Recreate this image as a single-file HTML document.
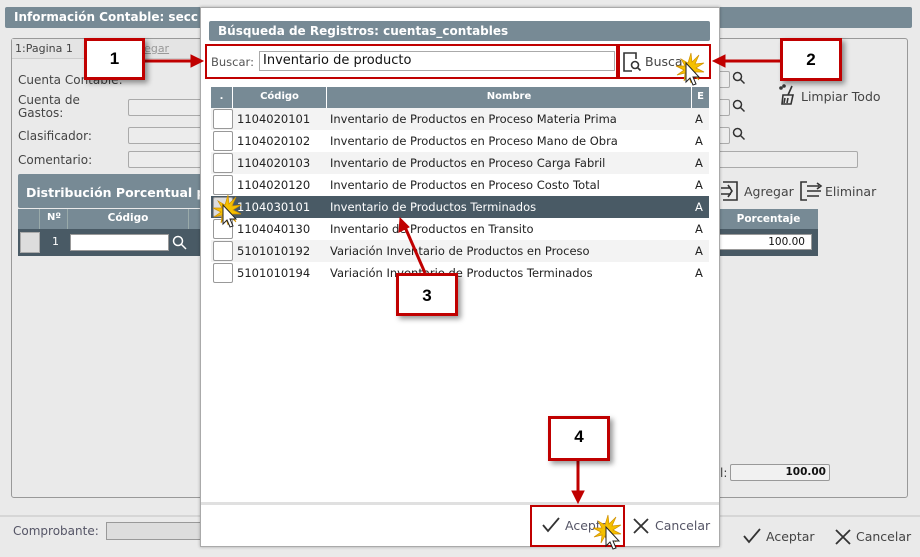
<!DOCTYPE html>
<html><head><meta charset="utf-8"><style>
*{box-sizing:border-box;margin:0;padding:0}
body{width:920px;height:557px;background:#eaeaea;font-family:"DejaVu Sans","Liberation Sans",sans-serif;font-size:12px;color:#333;position:relative;overflow:hidden}
.a{position:absolute}
.hdr{background:#778a95;color:#fff;font-weight:bold;font-size:12px;border-radius:2px;white-space:nowrap;overflow:hidden}
.inp{position:absolute;border:1px solid #aaa;background:#ececec;border-radius:2px}
.lbl{position:absolute;color:#444;font-size:12px;white-space:nowrap}
.row{position:absolute;left:211px;width:498px;height:22px;font-size:11.5px;line-height:22px;color:#222}
.row span{position:absolute;white-space:nowrap}
.cb{position:absolute;left:2px;top:1px;width:20px;height:20px;border:1px solid #999;background:#fff;border-radius:2px}
.box{position:absolute;border:3px solid #c00000;background:#fff;box-shadow:3px 3px 5px rgba(0,0,0,.4);font-family:"Liberation Sans",sans-serif;font-weight:bold;font-size:17px;text-align:center;color:#000}
.rr{position:absolute;border:2px solid #c00000}
</style></head><body>
<div class="a hdr" style="left:5px;top:7px;width:907px;height:21px;padding:3px 9px">Información Contable: secc</div>
<div class="a" style="left:11px;top:38px;width:897px;height:460px;border:1px solid #999;border-radius:3px"></div>
<div class="a" style="left:12px;top:39px;width:190px;height:20px;background:#e4e4e4;border-bottom:1px solid #ccc;font-size:11px;color:#444;padding:3px 3px;white-space:nowrap">1:Pagina 1 &nbsp;&nbsp;&nbsp;&nbsp;&nbsp;&nbsp;&nbsp;&nbsp;&nbsp;&nbsp;&nbsp;&nbsp;&nbsp;&nbsp;<u style="color:#999">Agregar</u></div>
<div class="lbl" style="left:18px;top:73px">Cuenta Contable:</div>
<div class="lbl" style="left:18px;top:94px;line-height:13px">Cuenta de<br>Gastos:</div>
<div class="lbl" style="left:18px;top:129px">Clasificador:</div>
<div class="lbl" style="left:18px;top:153px">Comentario:</div>
<div class="inp" style="left:128px;top:99px;width:80px;height:17px"></div>
<div class="inp" style="left:128px;top:127px;width:80px;height:17px"></div>
<div class="inp" style="left:128px;top:151px;width:80px;height:17px"></div>
<div class="inp" style="left:718px;top:71px;width:12px;height:17px"></div>
<div class="inp" style="left:718px;top:99px;width:12px;height:17px"></div>
<div class="inp" style="left:718px;top:127px;width:12px;height:17px"></div>
<div class="inp" style="left:718px;top:151px;width:140px;height:17px"></div>
<svg class="a" style="left:732px;top:71px" width="14" height="80" fill="none" stroke="#333" stroke-width="1.5"><circle cx="5.5" cy="5.5" r="4"/><path d="M8.5 8.5l4 4"/><circle cx="5.5" cy="33.5" r="4"/><path d="M8.5 36.5l4 4"/><circle cx="5.5" cy="61.5" r="4"/><path d="M8.5 64.5l4 4"/></svg>
<svg class="a" style="left:778px;top:84px" width="20" height="22" fill="none" stroke="#333" stroke-width="1.6"><path d="M14 2l-4 9M5 11h10l-2 9H4z M7 14l-1 5M10 14l-1 5"/><circle cx="3" cy="4" r="1"/><circle cx="6" cy="2" r="1"/></svg>
<div class="lbl" style="left:801px;top:89px;font-size:12.5px">Limpiar Todo</div>
<div class="a hdr" style="left:18px;top:174px;width:184px;height:34px;padding:11px 8px;font-size:12.5px">Distribución Porcentual p</div>
<div class="a" style="left:18px;top:209px;width:184px;height:20px;background:#778a95"></div>
<div class="a" style="left:18px;top:209px;width:22px;height:20px;border-right:1px solid #9aa"></div>
<div class="a" style="left:41px;top:212px;color:#fff;font-size:10px;font-weight:bold;width:26px;text-align:center">Nº</div>
<div class="a" style="left:67px;top:209px;width:122px;height:20px;border-left:1px solid #9aa;border-right:1px solid #9aa;color:#fff;font-weight:bold;font-size:10.5px;text-align:center;padding-top:3px">Código</div>
<div class="a" style="left:18px;top:229px;width:184px;height:27px;background:#495a65"></div>
<div class="a" style="left:20px;top:232px;width:20px;height:21px;background:#ddd;border:1px solid #aaa"></div>
<div class="a" style="left:52px;top:235px;color:#fff;font-size:11px">1</div>
<div class="a" style="left:70px;top:234px;width:99px;height:17px;background:#fff;border:1px solid #999"></div>
<svg class="a" style="left:172px;top:235px" width="16" height="16" fill="none" stroke="#fff" stroke-width="1.5"><circle cx="6" cy="6" r="4.5"/><path d="M9.5 9.5l4.5 4.5"/></svg>
<svg class="a" style="left:719px;top:180px" width="22" height="22" fill="none" stroke="#333" stroke-width="1.6"><path d="M4 2h14v18H4M2 8h10M2 14h10M9 5l4 6-4 6"/></svg>
<div class="lbl" style="left:744px;top:184px;font-size:12.5px">Agregar</div>
<svg class="a" style="left:799px;top:180px" width="24" height="22" fill="none" stroke="#333" stroke-width="1.6"><path d="M8 2H2v18h6M8 6h12M8 11h14M8 16h12M18 3l4 3-4 3"/></svg>
<div class="lbl" style="left:825px;top:184px;font-size:12.5px">Eliminar</div>
<div class="a" style="left:719px;top:209px;width:99px;height:20px;background:#778a95;color:#fff;font-weight:bold;font-size:10.5px;text-align:center;padding-top:4px">Porcentaje</div>
<div class="a" style="left:719px;top:229px;width:99px;height:27px;background:#495a65"></div>
<div class="a" style="left:719px;top:234px;width:93px;height:16px;background:#fff;border:1px solid #999;text-align:right;font-size:10.5px;padding-right:6px;line-height:14px;color:#111">100.00</div>
<div class="lbl" style="left:720px;top:466px">l:</div>
<div class="a" style="left:730px;top:464px;width:100px;height:17px;border:1px solid #999;background:#f1f1f1;border-radius:2px;text-align:right;font-size:10.5px;font-weight:bold;padding-right:3px;line-height:15px;color:#111">100.00</div>
<div class="a" style="left:0;top:515px;width:920px;height:2px;background:#d6d6d6"></div>
<div class="lbl" style="left:13px;top:524px;color:#556">Comprobante:</div>
<div class="a" style="left:106px;top:522px;width:100px;height:18px;border:1px solid #999;background:#ddd"></div>
<svg class="a" style="left:742px;top:527px" width="20" height="18" fill="none" stroke="#333" stroke-width="1.8"><path d="M2 9l5 6L18 2"/></svg>
<div class="lbl" style="left:766px;top:529px;font-size:12.5px">Aceptar</div>
<svg class="a" style="left:834px;top:528px" width="18" height="18" fill="none" stroke="#333" stroke-width="1.8"><path d="M2 2l14 14M16 2L2 16"/></svg>
<div class="lbl" style="left:856px;top:529px;font-size:12.5px">Cancelar</div>

<div class="a" style="left:200px;top:7px;width:520px;height:540px;background:#fff;border:1px solid #aaa;box-shadow:0 0 3px rgba(0,0,0,.3)"></div>
<div class="a hdr" style="left:209px;top:21px;width:501px;height:20px;padding:3px 9px;font-size:12px">Búsqueda de Registros: cuentas_contables</div>
<div class="lbl" style="left:211px;top:55px;font-size:11.5px;color:#555">Buscar:</div>
<div class="a" style="left:259px;top:51px;width:356px;height:20px;border:1px solid #aaa;font-size:13px;color:#111;padding:1px 3px">Inventario de producto</div>
<svg class="a" style="left:622px;top:51px" width="20" height="22" fill="none" stroke="#333" stroke-width="1.6"><path d="M10 20H2V2h12v6"/><circle cx="13" cy="14" r="3.5"/><path d="M15.5 16.5l3 3"/></svg>
<div class="lbl" style="left:645px;top:54px;font-size:12.5px">Busca</div>
<div class="a" style="left:211px;top:87px;width:498px;height:21px;background:#778a95;color:#fff;font-weight:bold;font-size:10px">
<div class="a" style="left:0;top:0;width:22px;height:21px;border-right:1px solid #fff;text-align:center;padding-top:4px">.</div>
<div class="a" style="left:22px;top:0;width:94px;height:21px;border-right:1px solid #fff;text-align:center;padding-top:4px">Código</div>
<div class="a" style="left:116px;top:0;width:365px;height:21px;border-right:1px solid #fff;text-align:center;padding-top:4px">Nombre</div>
<div class="a" style="left:481px;top:0;width:17px;height:21px;text-align:center;padding-top:4px">E</div>
</div>
<div class="row" style="top:108px;background:#f3f3f3"><i class="cb"></i><span style="left:26px">1104020101</span><span style="left:119px">Inventario de Productos en Proceso Materia Prima</span><span style="left:484px">A</span></div>
<div class="row" style="top:130px;background:#fff"><i class="cb"></i><span style="left:26px">1104020102</span><span style="left:119px">Inventario de Productos en Proceso Mano de Obra</span><span style="left:484px">A</span></div>
<div class="row" style="top:152px;background:#f3f3f3"><i class="cb"></i><span style="left:26px">1104020103</span><span style="left:119px">Inventario de Productos en Proceso Carga Fabril</span><span style="left:484px">A</span></div>
<div class="row" style="top:174px;background:#fff"><i class="cb"></i><span style="left:26px">1104020120</span><span style="left:119px">Inventario de Productos en Proceso Costo Total</span><span style="left:484px">A</span></div>
<div class="row" style="top:196px;background:#495a65;color:#fff"><i class="cb" style="background:#ddd"></i><span style="left:26px">1104030101</span><span style="left:119px">Inventario de Productos Terminados</span><span style="left:484px">A</span></div>
<div class="row" style="top:218px;background:#fff"><i class="cb"></i><span style="left:26px">1104040130</span><span style="left:119px">Inventario de Productos en Transito</span><span style="left:484px">A</span></div>
<div class="row" style="top:240px;background:#f3f3f3"><i class="cb"></i><span style="left:26px">5101010192</span><span style="left:119px">Variación Inventario de Productos en Proceso</span><span style="left:484px">A</span></div>
<div class="row" style="top:262px;background:#fff"><i class="cb"></i><span style="left:26px">5101010194</span><span style="left:119px">Variación Inventario de Productos Terminados</span><span style="left:484px">A</span></div>
<div class="a" style="left:201px;top:502px;width:518px;height:3px;background:#e0e0e0"></div>
<svg class="a" style="left:541px;top:516px" width="20" height="18" fill="none" stroke="#333" stroke-width="1.8"><path d="M2 9l5 6L18 2"/></svg>
<div class="lbl" style="left:565px;top:518px;font-size:12.5px;color:#556">Acepta</div>
<svg class="a" style="left:632px;top:517px" width="18" height="18" fill="none" stroke="#333" stroke-width="1.8"><path d="M2 2l14 14M16 2L2 16"/></svg>
<div class="lbl" style="left:655px;top:518px;font-size:12.5px;color:#556">Cancelar</div>

<div class="rr" style="left:205px;top:44px;width:413px;height:35px"></div>
<div class="rr" style="left:618px;top:44px;width:93px;height:35px"></div>
<div class="rr" style="left:530px;top:505px;width:95px;height:42px"></div>
<svg class="a" style="left:0;top:0" width="920" height="557">
<g stroke="#c00000" stroke-width="3" fill="#c00000">
<path d="M145 61H192"/><path d="M203 61l-12-6v12z" stroke-width="1"/>
<path d="M780 61H724"/><path d="M713 61l12-6v12z" stroke-width="1"/>
<path d="M425 273L405 227"/><path d="M400 218l-1 14 10-5z" stroke-width="1"/>
<path d="M578 460V492"/><path d="M578 503l-6-12h12z" stroke-width="1"/>
</g>
<g fill="#f5c000" stroke="#d09000" stroke-width=".7">
<path d="M688 63l3-10 1 9 7-7-4 9 9-1-8 5 8 4-9 0 4 8-7-6-1 9-3-9-4 7 1-8-8 2 7-5-8-4 9 0-4-7z"/>
<path d="M225 205l3-10 1 9 7-7-4 9 9-1-8 5 8 4-9 0 4 8-7-6-1 9-3-9-4 7 1-8-8 2 7-5-8-4 9 0-4-7z"/>
<path d="M605 525l3-10 1 9 7-7-4 9 9-1-8 5 8 4-9 0 4 8-7-6-1 9-3-9-4 7 1-8-8 2 7-5-8-4 9 0-4-7z"/>
</g>
<g fill="#fff" stroke="#222" stroke-width="1">
<path d="M686 63v19l4-4 3 7 3-1-3-7h6z"/>
<path d="M223 205v19l4-4 3 7 3-1-3-7h6z"/>
<path d="M606 527v19l4-4 3 7 3-1-3-7h6z"/>
</g>
</svg>
<div class="box" style="left:84px;top:38px;width:61px;height:42px;line-height:36px">1</div>
<div class="box" style="left:780px;top:38px;width:62px;height:43px;line-height:37px">2</div>
<div class="box" style="left:396px;top:273px;width:62px;height:43px;line-height:40px">3</div>
<div class="box" style="left:548px;top:416px;width:62px;height:45px;line-height:36px">4</div>
</body></html>
